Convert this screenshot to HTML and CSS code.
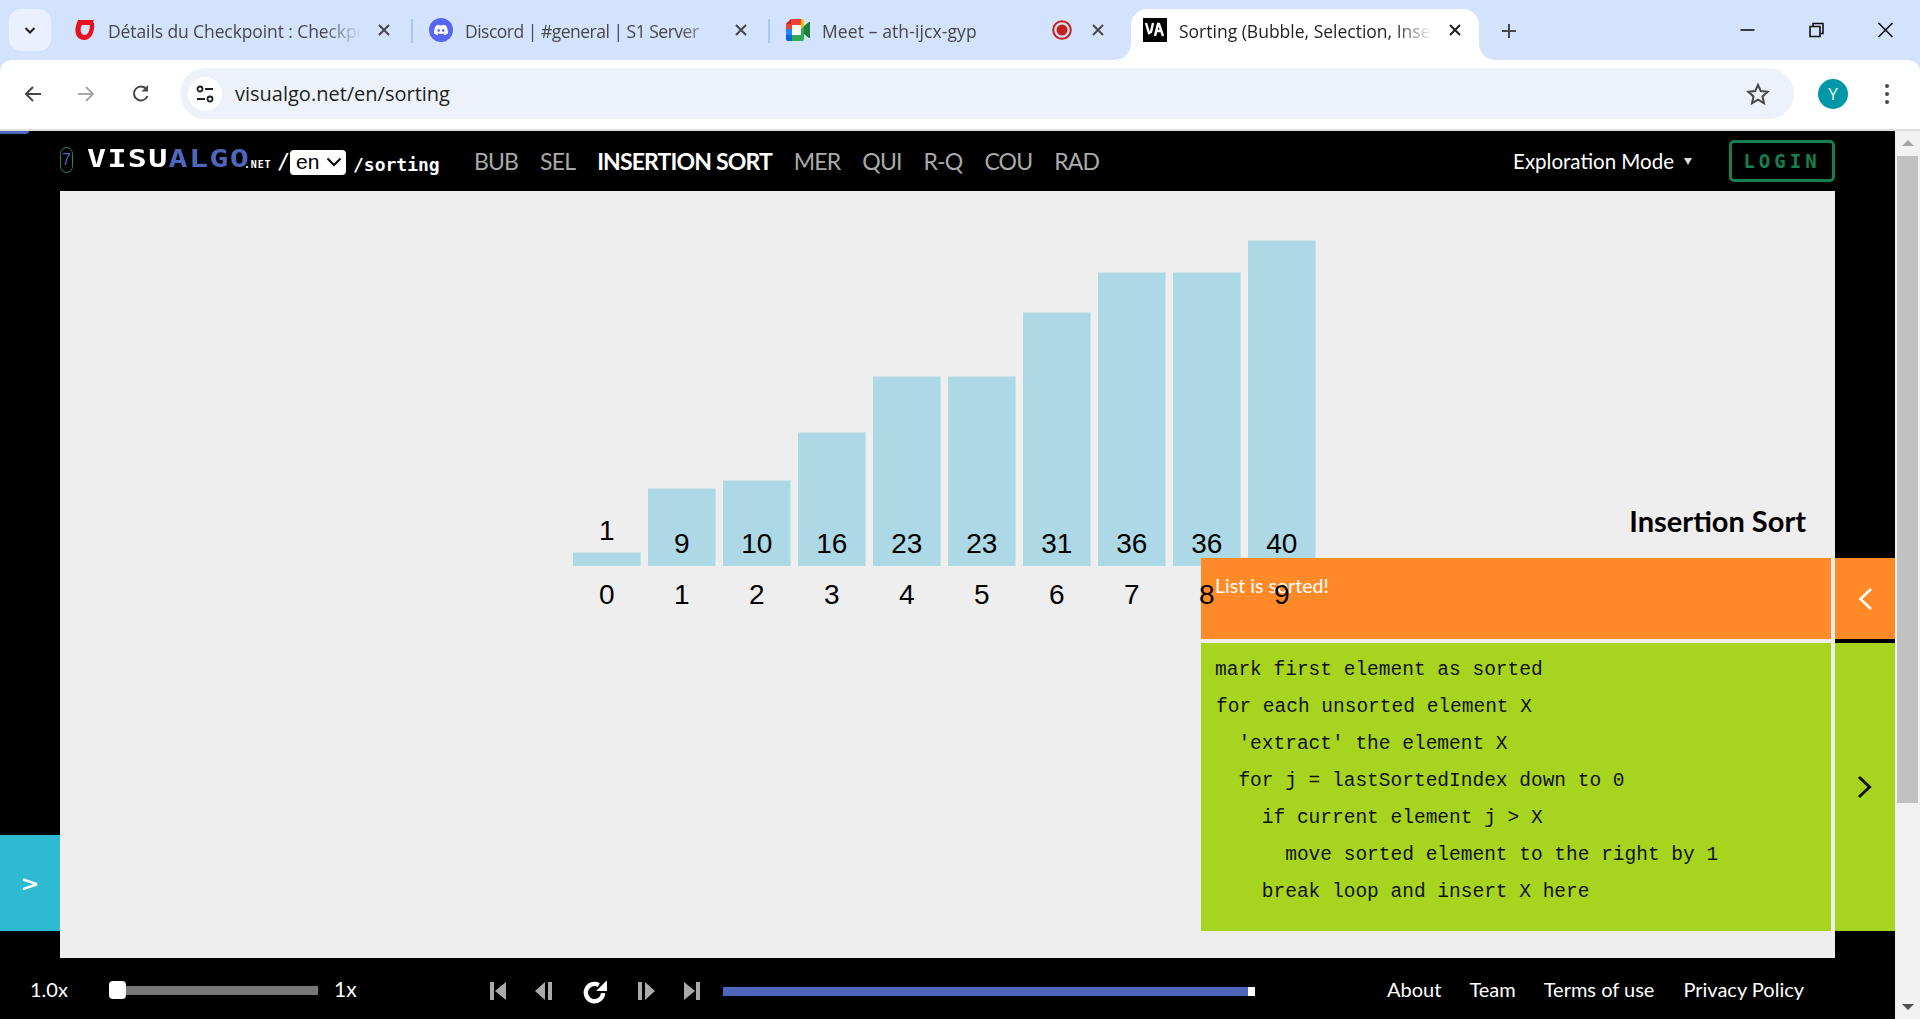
FILE: index.html
```html
<!DOCTYPE html>
<html lang="en">
<head>
<meta charset="utf-8">
<title>Sorting (Bubble, Selection, Insertion)</title>
<link rel="stylesheet" href="styles.css">
</head>
<body>
<header class="chrome">
  <div class="tabstrip">
    <button class="tablist-btn"><svg width="16" height="16" viewBox="0 0 16 16"><path d="M3.500 6l4.500 4.500L12.500 6" fill="none" stroke="#1f1f1f" stroke-width="2"/></svg></button>
    <div class="tab">
      <svg class="favicon" viewBox="0 0 22 24"><path d="M4 2h16l-1 2 1 1c1 7-2 17-9.500 17C3 22 0 15 2 8c.5-2 1-4 2-6zm3 7c-1 4 0 8 3.500 8s5.500-5 5.500-10H8z" fill="#e8101e" fill-rule="evenodd"/></svg>
      <span class="tab-title title-first">Détails du Checkpoint : Checkpoint</span>
      <svg class="close" viewBox="0 0 14 14"><path d="M2 2l10 10M12 2L2 12"/></svg>
    </div>
    <div class="tab tab-sep">
      <svg class="favicon" viewBox="0 0 24 24"><circle cx="12" cy="12" r="12" fill="#5865f2"/><g transform="translate(5 5) scale(.58)"><path fill="#fff" d="M20.317 4.370a19.791 19.791 0 0 0-4.885-1.515.074.074 0 0 0-.079.037c-.21.375-.444.864-.608 1.250a18.270 18.270 0 0 0-5.487 0 12.640 12.640 0 0 0-.617-1.250.077.077 0 0 0-.079-.037A19.736 19.736 0 0 0 3.677 4.370a.07.07 0 0 0-.032.027C.533 9.046-.32 13.580.099 18.057a.082.082 0 0 0 .031.057 19.900 19.900 0 0 0 5.993 3.030.078.078 0 0 0 .084-.028 14.090 14.090 0 0 0 1.226-1.994.076.076 0 0 0-.041-.106 13.107 13.107 0 0 1-1.872-.892.077.077 0 0 1-.008-.128 10.200 10.200 0 0 0 .372-.292.074.074 0 0 1 .077-.01c3.928 1.793 8.180 1.793 12.062 0a.074.074 0 0 1 .078.01c.12.098.246.198.373.292a.077.077 0 0 1-.006.127 12.299 12.299 0 0 1-1.873.892.077.077 0 0 0-.041.107c.36.698.772 1.362 1.225 1.993a.076.076 0 0 0 .084.028 19.839 19.839 0 0 0 6.002-3.030.077.077 0 0 0 .032-.054c.5-5.177-.838-9.674-3.549-13.660a.061.061 0 0 0-.031-.03zM8.020 15.330c-1.183 0-2.157-1.085-2.157-2.419 0-1.333.956-2.419 2.157-2.419 1.210 0 2.176 1.096 2.157 2.420 0 1.333-.956 2.418-2.157 2.418zm7.975 0c-1.183 0-2.157-1.085-2.157-2.419 0-1.333.955-2.419 2.157-2.419 1.210 0 2.176 1.096 2.157 2.420 0 1.333-.946 2.418-2.157 2.418z"/></g></svg>
      <span class="tab-title title-discord">Discord | #general | S1 Server</span>
      <svg class="close" viewBox="0 0 14 14"><path d="M2 2l10 10M12 2L2 12"/></svg>
    </div>
    <div class="tab tab-sep">
      <svg class="favicon" viewBox="0 0 24 22"><path d="M5 0h10v6H6v4H0V5z" fill="#ea4335"/><path d="M5 0v5H0z" fill="#c5221f"/><path d="M15 0h1a2 2 0 0 1 2 2v5l-3 3V6z" fill="#fbbc04"/><path d="M0 10h6v6H0z" fill="#2684fc"/><path d="M0 16h6v6H2a2 2 0 0 1-2-2z" fill="#0066da"/><path d="M6 16h9v-6l3-3v13a2 2 0 0 1-2 2H6z" fill="#34a853"/><path d="M18 7l5-4c.5-.4 1 0 1 .5v15c0 .5-.5 1-1 .5l-5-4z" fill="#188038"/><path d="M6 6h9v10H6z" fill="#fff"/></svg>
      <span class="tab-title title-meet">Meet – ath-ijcx-gyp</span>
      <svg class="rec" viewBox="0 0 20 24"><circle cx="10" cy="12" r="8.800" fill="none" stroke="#c5221f" stroke-width="2"/><circle cx="10" cy="12" r="5.500" fill="#c5221f"/></svg>
      <svg class="close" viewBox="0 0 14 14"><path d="M2 2l10 10M12 2L2 12"/></svg>
    </div>
    <div class="tab-active">
      <svg class="favicon" viewBox="0 0 24 24"><rect width="24" height="24" fill="#000"/><path d="M3 5l3 10 2-1 2-9M12 18l3-12 1 0 4 12M13 13h6" fill="none" stroke="#fff" stroke-width="2.400"/></svg>
      <span class="tab-title tab-title-active">Sorting (Bubble, Selection, Insertion, Merge</span>
      <svg class="close close-active" viewBox="0 0 14 14"><path d="M2 2l10 10M12 2L2 12"/></svg>
    </div>
    <svg class="newtab" viewBox="0 0 16 16"><path d="M8 1v14M1 8h14"/></svg>
    <div class="winctl">
      <svg viewBox="0 0 16 16"><path d="M1 8h14"/></svg>
      <svg viewBox="0 0 16 16"><path d="M1.500 4.500h10v10h-10zM4.500 4.500v-3h10v10h-3"/></svg>
      <svg viewBox="0 0 16 16"><path d="M1 1l14 14M15 1L1 15"/></svg>
    </div>
  </div>
  <div class="toolbar">
    <svg class="tb-icon" viewBox="0 0 20 20"><path d="M18 10H3M10 3l-7 7 7 7" fill="none" stroke="#474747" stroke-width="2"/></svg>
    <svg class="tb-icon tb-fwd" viewBox="0 0 20 20"><path d="M2 10h15M10 3l7 7-7 7" fill="none" stroke="#a8a8a8" stroke-width="2"/></svg>
    <svg class="tb-icon tb-reload" viewBox="0 0 20 20"><path d="M16.500 12a7 7 0 1 1-1-6.800" fill="none" stroke="#474747" stroke-width="2"/><path d="M17 1v6.500h-6.500z" fill="#474747"/></svg>
    <div class="omnibox">
      <span class="tune"><svg width="20" height="20" viewBox="0 0 20 20"><g fill="none" stroke="#1f1f1f" stroke-width="1.800"><circle cx="5" cy="5" r="2.500"/><path d="M10 5h8M2 15h8"/><circle cx="15" cy="15" r="2.500"/></g></svg></span>
      <span class="url">visualgo.net/en/sorting</span>
      <svg class="star" viewBox="0 0 24 24"><path d="M12 2.800l2.800 6.300 6.900.7-5.200 4.600 1.500 6.800-6-3.500-6 3.500 1.500-6.800-5.200-4.600 6.900-.7z" fill="none" stroke="#474747" stroke-width="2"/></svg>
    </div>
    <span class="avatar">Y</span>
    <span class="dots"><i></i><i></i><i></i></span>
  </div>
</header>
<div class="viewport">
  <div class="page">
    <span class="load-bar"></span>
    <nav class="sitenav">
      <span class="seven">7</span>
      <span class="logo-box"><span class="logo">VISU<b>ALGO</b></span></span><span class="logo-net">.NET</span><span class="logo-slash">/</span>
      <span class="lang">en<svg width="16" height="10" viewBox="0 0 16 10"><path d="M1.500 1.500L8 8l6.500-6.500" fill="none" stroke="#000" stroke-width="2"/></svg></span>
      <span class="path">/sorting</span>
      <ul class="algos">
        <li>BUB</li><li>SEL</li><li class="current">INSERTION SORT</li><li>MER</li><li>QUI</li><li>R-Q</li><li>COU</li><li>RAD</li>
      </ul>
      <span class="mode">Exploration Mode<i></i></span>
      <span class="login">LOGIN</span>
    </nav>
    <main class="main">
      <div class="gutter-left"></div>
      <section class="canvas">
        <div class="chart">
          <div class="col"><div class="plot"><div class="bar" style="height:14px"></div><span class="val val-top">1</span></div><span class="idx">0</span></div>
          <div class="col"><div class="plot"><div class="bar" style="height:78px"></div><span class="val">9</span></div><span class="idx">1</span></div>
          <div class="col"><div class="plot"><div class="bar" style="height:86px"></div><span class="val">10</span></div><span class="idx">2</span></div>
          <div class="col"><div class="plot"><div class="bar" style="height:134px"></div><span class="val">16</span></div><span class="idx">3</span></div>
          <div class="col"><div class="plot"><div class="bar" style="height:190px"></div><span class="val">23</span></div><span class="idx">4</span></div>
          <div class="col"><div class="plot"><div class="bar" style="height:190px"></div><span class="val">23</span></div><span class="idx">5</span></div>
          <div class="col"><div class="plot"><div class="bar" style="height:254px"></div><span class="val">31</span></div><span class="idx">6</span></div>
          <div class="col"><div class="plot"><div class="bar" style="height:294px"></div><span class="val">36</span></div><span class="idx">7</span></div>
          <div class="col"><div class="plot"><div class="bar" style="height:294px"></div><span class="val">36</span></div><span class="idx">8</span></div>
          <div class="col"><div class="plot"><div class="bar" style="height:326px"></div><span class="val">40</span></div><span class="idx">9</span></div>
        </div>
        <h1 class="algo-title">Insertion Sort</h1>
      </section>
      <div class="gutter-right"></div>
      <button class="side-open">&gt;</button>
      <div class="status-panel"><p class="status-text">List is sorted!</p></div>
      <div class="status-side"><svg width="16" height="24" viewBox="0 0 16 24"><path d="M14 2L3.500 12 14 22" fill="none" stroke="#fff" stroke-width="2.600"/></svg></div>
      <pre class="code-panel"><span>mark first element as sorted</span>
<span class="shift">for each unsorted element X</span>
<span>  'extract' the element X</span>
<span>  for j = lastSortedIndex down to 0</span>
<span>    if current element j &gt; X</span>
<span>      move sorted element to the right by 1</span>
<span>    break loop and insert X here</span></pre>
      <div class="code-side"><svg width="16" height="24" viewBox="0 0 16 24"><path d="M2 2l10.500 10L2 22" fill="none" stroke="#111" stroke-width="3"/></svg></div>
    </main>
    <footer class="player">
      <span class="speed">1.0x</span>
      <div class="slider"><span class="thumb"></span></div>
      <span class="speed speed-end">1x</span>
      <div class="controls">
        <svg class="ctl ctl-a" viewBox="0 0 16 18"><path d="M0 0h4v18H0zM16 0v18L5 9z"/></svg>
        <svg class="ctl ctl-b" viewBox="0 0 18 18"><path d="M10 0v18L0 9zM13 0h4v18h-4z"/></svg>
        <svg class="ctl-replay" viewBox="0 0 24 24"><path d="M19.500 14a8 8 0 1 1-4-7.500" fill="none" stroke="#fff" stroke-width="4"/><path d="M23 2v10H13z" fill="#fff"/></svg>
        <svg class="ctl ctl-c" viewBox="0 0 18 18"><path d="M1 0h4v18H1zM8 0v18L18 9z"/></svg>
        <svg class="ctl ctl-d" viewBox="0 0 16 18"><path d="M0 0v18l11-9zM12 0h4v18h-4z"/></svg>
      </div>
      <div class="progress"><span class="progress-end"></span></div>
      <ul class="links">
        <li>About</li><li>Team</li><li>Terms of use</li><li>Privacy Policy</li>
      </ul>
    </footer>
  </div>
  <aside class="scrollbar">
    <i class="arrow-up"></i>
    <span class="sb-thumb"></span>
    <i class="arrow-down"></i>
  </aside>
</div>
</body>
</html>
```
FILE: styles.css
```css
* { box-sizing: border-box; }
html, body { margin: 0; height: 100%; overflow: hidden; }
body { display: flex; flex-direction: column; height: 1019px; background: #000; font-family: "Open Sans", sans-serif; }

/* browser chrome */
.chrome { flex: none; background: #d3e3fd; }
.tabstrip { display: flex; align-items: flex-start; height: 60px; padding-top: 9px; padding-left: 9px; position: relative; }
.tablist-btn { width: 42px; height: 42px; flex: none; border: 0; border-radius: 12px; background: #e9f1fe; display: flex; align-items: center; justify-content: center; padding: 0; margin-right: 4px; }
.tab { position: relative; width: 357px; height: 42px; flex: none; display: flex; align-items: center; padding-left: 18px; padding-right: 21px; }
.tab-sep::before { content: ""; position: absolute; left: -1px; top: 10px; width: 2px; height: 24px; background: #a8c7fa; }
.tab-sep { padding-left: 17px; }
.favicon { width: 24px; height: 24px; flex: none; margin-right: 12px; }
.tab-title { flex: 1; min-width: 0; white-space: nowrap; overflow: hidden; font-size: 17.500px; line-height: 26px; margin-top: 1px; color: #474747; -webkit-mask-image: linear-gradient(to right, #000 85%, transparent 100%); mask-image: linear-gradient(to right, #000 85%, transparent 100%); }
.title-first { margin-left: -1px; letter-spacing: -.1px; }
.title-discord { letter-spacing: -.5px; }
.title-meet { letter-spacing: .1px; }
.tab-title-active { color: #1f1f1f; }
.close { width: 14px; height: 14px; flex: none; margin-left: 16px; fill: none; stroke: #474747; stroke-width: 2; }
.close-active { stroke: #1f1f1f; }
.rec { width: 20px; height: 24px; flex: none; margin-left: 8px; margin-right: 9px; }
.rec + .close { margin-left: 10px; }
.tab-active { width: 348px; height: 51px; flex: none; margin-left: 5px; padding: 0 17px 9px 12px; background: #fff; border-radius: 16px 16px 0 0; display: flex; align-items: center; position: relative; }
.tab-active::before, .tab-active::after { content: ""; position: absolute; bottom: 0; width: 16px; height: 16px; }
.tab-active::before { left: -16px; background: radial-gradient(circle at 0 0, #d3e3fd 15.500px, #fff 16px); }
.tab-active::after { right: -16px; background: radial-gradient(circle at 100% 0, #d3e3fd 15.500px, #fff 16px); }
.newtab { width: 16px; height: 16px; flex: none; margin-left: 22px; margin-top: 14px; fill: none; stroke: #474747; stroke-width: 2; }
.winctl { margin-left: auto; display: flex; align-self: flex-start; margin-top: 13px; }
.winctl svg { width: 69px; height: 16px; fill: none; stroke: #111; stroke-width: 1.600; }

.toolbar { height: 71px; background: #fff; border-bottom: 2px solid #dedede; border-radius: 12px 12px 0 0; display: flex; align-items: center; padding: 0 0 2px 23px; }
.tb-icon { width: 20px; height: 20px; flex: none; }
.tb-fwd { margin-left: 33px; }
.tb-reload { margin-left: 35px; }
.omnibox { width: 1614px; height: 51px; margin-left: 29px; border-radius: 26px; background: #edf2fa; display: flex; align-items: center; padding-left: 8px; padding-right: 24px; flex: none; }
.tune { width: 34px; height: 34px; border-radius: 50%; background: #fff; display: flex; align-items: center; justify-content: center; flex: none; }
.url { margin-left: 13px; font-size: 20px; color: #1f1f1f; }
.star { width: 24px; height: 24px; margin-left: auto; }
.avatar { width: 30px; height: 30px; margin-left: 24px; border-radius: 50%; background: #0097a7; color: #e8f7f9; font-size: 17px; display: flex; align-items: center; justify-content: center; flex: none; }
.dots { margin-left: 37px; display: flex; flex-direction: column; gap: 4px; }
.dots i { display: block; width: 4px; height: 4px; border-radius: 50%; background: #474747; }

/* page */
.viewport { flex: 1; display: flex; min-height: 0; }
.page { width: 1895px; flex: none; display: flex; flex-direction: column; position: relative; background: #000; }
.load-bar { position: absolute; left: 0; top: 0; width: 29px; height: 3px; background: #4e66bb; border-radius: 0 0 3px 0; }
.sitenav { height: 60px; flex: none; display: flex; align-items: center; padding-left: 60px; color: #fff; }
.seven { width: 13px; height: 26px; border: 1px solid #1c8a58; border-radius: 7px; color: #4e66bb; font-size: 16px; line-height: 24px; text-align: center; font-family: "Liberation Sans", sans-serif; margin-top: -2px; }
.logo-box { margin-left: 14px; width: 157px; height: 26px; margin-top: -4px; flex: none; }
.logo { display: inline-block; transform: scaleX(1.32); transform-origin: 0 50%; font-family: "DejaVu Sans Mono", monospace; font-weight: 700; font-size: 24px; letter-spacing: 1px; line-height: 26px; white-space: nowrap; }
.logo b { color: #4e66bb; }
.logo-net { font-family: "DejaVu Sans Mono", monospace; font-weight: 700; font-size: 10px; width: 29px; margin-top: 6px; letter-spacing: .8px; }
.logo-slash { font-family: "DejaVu Sans Mono", monospace; font-size: 22px; margin-left: 4px; width: 13px; }
.lang { width: 56px; height: 25px; background: #fff; color: #000; border-radius: 4px; font-family: "Liberation Sans", sans-serif; font-size: 21px; display: flex; align-items: center; gap: 7px; padding-left: 6px; margin-top: 2px; }
.path { margin-left: 7px; font-family: "DejaVu Sans Mono", monospace; font-weight: 700; font-size: 18px; width: 85px; margin-top: 6px; }
.algos { list-style: none; margin: 0 0 0 36px; padding: 0; display: flex; gap: 22px; font-family: "Lato", sans-serif; font-size: 23px; letter-spacing: -.85px; color: #aaa; }
.current { color: #fff; font-weight: 700; }
.mode { margin-left: auto; font-family: "Lato", sans-serif; font-size: 20.500px; display: flex; align-items: center; gap: 10px; margin-right: 37px; }
.mode i { width: 0; height: 0; border-left: 4px solid transparent; border-right: 4px solid transparent; border-top: 7px solid #ddd; }
.login { width: 106px; height: 42px; margin-right: 60px; border: 3px solid #157f50; border-radius: 5px; color: #157f50; font-family: "DejaVu Sans Mono", monospace; font-weight: 700; font-size: 19px; letter-spacing: 4px; text-align: center; line-height: 36px; }

.main { flex: 1; min-height: 0; display: flex; position: relative; }
.gutter-left { width: 60px; flex: none; background: #000; }
.gutter-right { width: 60px; flex: none; background: #000; }
.canvas { flex: 1; position: relative; background: #eee; padding: 48px 0 0 513px; }
.chart { display: flex; gap: 7.500px; font-family: "Liberation Sans", sans-serif; font-size: 28px; color: #000; }
.col { width: 67.500px; display: flex; flex-direction: column; align-items: stretch; }
.plot { height: 327px; display: grid; }
.bar, .val { grid-area: 1 / 1; align-self: end; }
.bar { background: #add8e6; border-top: 1px solid #c9e3ec; border-right: 1px solid #c9e3ec; }
.val { text-align: center; line-height: 32px; margin-bottom: 6px; }
.val-top { margin-bottom: 19px; }
.idx { position: relative; z-index: 2; text-align: center; line-height: 32px; margin-top: 13px; }
.algo-title { position: absolute; right: 29px; top: 312px; margin: 0; font-family: "Lato", sans-serif; font-size: 29px; line-height: 36px; font-weight: 700; color: #000; }

.side-open { position: absolute; left: 0; top: 644px; width: 60px; height: 96px; border: 0; padding: 0; background: #2ebbd1; color: #fff; font-family: "DejaVu Sans", sans-serif; font-weight: 700; font-size: 22px; }
.status-panel { position: absolute; left: 1201px; top: 367px; width: 630px; height: 81px; background: #ff8a27; z-index: 1; padding: 15px 14px; }
.status-text { margin: 0; color: #fff; font-family: "Lato", sans-serif; font-size: 19.600px; line-height: 26px; }
.status-side { position: absolute; left: 1835px; top: 367px; width: 60px; height: 81px; background: #ff8a27; display: flex; align-items: center; justify-content: center; }
.code-panel { position: absolute; left: 1201px; top: 452px; width: 630px; height: 288px; margin: 0; padding: 9px 14px; background: #a7d41e; font-family: "Liberation Mono", monospace; font-size: 19.500px; line-height: 37px; color: #111; z-index: 1; }
.code-panel .shift { margin-left: 1px; }
.code-side { position: absolute; left: 1835px; top: 452px; width: 60px; height: 288px; background: #a7d41e; display: flex; align-items: center; justify-content: center; }

.player { height: 61px; flex: none; display: flex; align-items: center; color: #fff; padding-left: 30px; font-family: "Lato", sans-serif; font-size: 20px; }
.speed { width: 39px; }
.slider { width: 209px; height: 9px; margin-left: 40px; margin-top: 4px; background: #777; position: relative; flex: none; }
.thumb { position: absolute; left: 0; top: -5px; width: 17px; height: 18px; background: #fff; border-radius: 4px; }
.speed-end { margin-left: 16px; width: 23px; font-size: 21px; }
.controls { margin-left: 133px; margin-top: 4px; display: flex; align-items: center; width: 210px; flex: none; }
.ctl { width: 16px; height: 18px; fill: #aaa; flex: none; }
.ctl-b { margin-left: 29px; width: 18px; }
.ctl-replay { width: 26px; height: 26px; margin-left: 29px; flex: none; }
.ctl-c { margin-left: 29px; width: 18px; }
.ctl-d { margin-left: 29px; }
.progress { width: 532px; height: 9px; margin-left: 23px; margin-top: 6px; background: #4e66bb; position: relative; flex: none; }
.progress-end { position: absolute; right: 0; top: 0; width: 7px; height: 9px; background: #fff; }
.links { list-style: none; margin: 0 0 0 132px; padding: 0; display: flex; gap: 28px; }
.links li:last-child { margin-left: 1px; }

.scrollbar { flex: 1; background: #f1f1f1; display: flex; flex-direction: column; align-items: center; position: relative; }
.arrow-up { margin-top: 9px; width: 0; height: 0; border-left: 6px solid transparent; border-right: 6px solid transparent; border-bottom: 6px solid #a3a3a3; }
.sb-thumb { width: 21px; height: 647px; margin-top: 10px; background: #c1c1c1; }
.arrow-down { margin-top: auto; margin-bottom: 9px; width: 0; height: 0; border-left: 6px solid transparent; border-right: 6px solid transparent; border-top: 6px solid #505050; }
```
